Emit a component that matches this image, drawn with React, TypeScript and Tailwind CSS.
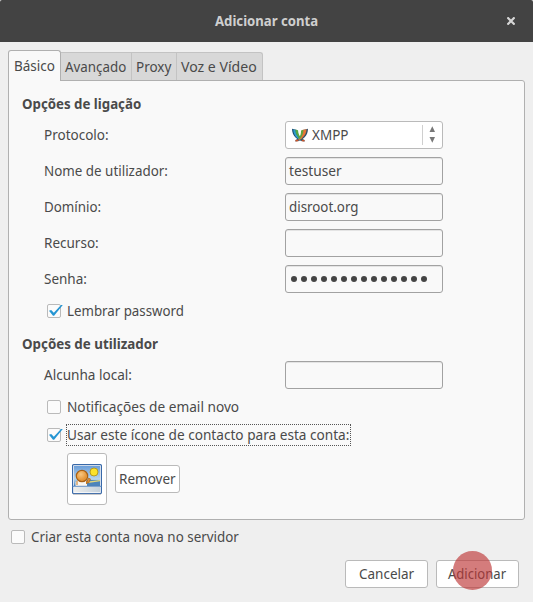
import type { ReactNode } from "react";

function T({ children, className = "scale-x-[0.9]" }: { children: ReactNode; className?: string }) {
  return <span className={"inline-block origin-left -translate-y-px whitespace-nowrap " + className}>{children}</span>;
}

function Tab({ width, textScale, children }: { width: string; textScale: string; children: ReactNode }) {
  return (
    <div className={"h-[29px] shrink-0 border-t border-r border-[#c3c3c3] bg-[#d8d8d8] pl-[4px] leading-[29px] last:rounded-tr-[3px] " + width}>
      <T className={textScale}>{children}</T>
    </div>
  );
}

function Row({ label, textScale, children }: { label: string; textScale: string; children?: ReactNode }) {
  return (
    <div className="flex h-7 items-center">
      <div className="w-[241px] shrink-0 leading-7">
        <T className={textScale}>{label}</T>
      </div>
      {children}
    </div>
  );
}

function Field({ children }: { children?: ReactNode }) {
  return (
    <div className="flex h-7 w-[158px] items-center rounded-[3px] border border-[#a2a2a2] bg-[#f9f9f9] pl-[3px] shadow-[inset_0_1px_0_#e4e4e4]">
      {children}
    </div>
  );
}

function Check({ checked }: { checked?: boolean }) {
  return (
    <div className="h-[14px] w-[14px] shrink-0 rounded-[2px] border border-[#bababa] bg-[#fbfbfb]">
      {checked && (
        <svg className="-mt-px -ml-px overflow-visible" width="16" height="14" viewBox="0 0 16 14">
          <path d="M2 6.7L4.2 6L6.8 8.7L14 1L15.8 1.1L7.1 11.7L6 11.7Z" fill="#2495d3" />
        </svg>
      )}
    </div>
  );
}

function XmppLogo() {
  return (
    <svg width="16" height="14" viewBox="0 0 16 14">
      <path d="M0 .7L5 2C5.2 6.8 8 10 12.5 12V13.5C5.3 12.5 0 8 0 .7Z" fill="#174c70" />
      <path d="M16 .7L11 2C10.8 6.8 8 10 3.5 12V13.5C10.7 12.5 16 8 16 .7Z" fill="#31516b" />
      <path d="M1.3 1.5L3.6 2C4 6.5 5.5 8.8 8.5 11L7.5 11.7C3.6 9.5 1.3 6 1.3 1.5Z" fill="#2d9bcc" />
      <path d="M3.3 1.5L6 2.2C6.3 5.7 7.5 8.5 10 10.8L9 11.6C5.2 9.3 3.6 6 3.3 1.5Z" fill="#55a947" />
      <path d="M14.5 1.3L10 2C10 5.7 9 8.8 6 11.2L7.4 12C12 9.2 14.3 6 14.5 1.3Z" fill="#e87536" />
      <path d="M9 2.4L11.5 1.7C11.4 5.8 10 8.8 7.5 11L6.5 10.6C8.5 8 9 5.5 9 2.4Z" fill="#60a543" />
      <path d="M3.5 12L6 11.4L6.5 13.2L3.5 13.5Z" fill="#c95327" />
      <path d="M10 11.4L12.5 12L12.5 13.5L9.5 13.2Z" fill="#c95327" />
    </svg>
  );
}

function PhotoIcon() {
  return (
    <svg width="30" height="31" viewBox="0 0 30 31">
      <defs>
        <linearGradient id="sky" x1="0" y1="0" x2="0" y2="1">
          <stop offset="0" stopColor="#6b9ed9" />
          <stop offset=".65" stopColor="#b7d5ed" />
          <stop offset="1" stopColor="#427fbd" />
        </linearGradient>
        <linearGradient id="paper">
          <stop stopColor="#eeeeec" />
          <stop offset="1" stopColor="#c4d1dc" />
        </linearGradient>
        <radialGradient id="face" cx=".4" cy=".35">
          <stop stopColor="#f8c781" />
          <stop offset="1" stopColor="#e59638" />
        </radialGradient>
      </defs>
      <rect x=".6" y=".6" width="28.8" height="29" rx="1" fill="#fff" stroke="#3869a9" strokeWidth="1.2" />
      <rect x="2" y="2" width="26" height="20" fill="url(#sky)" />
      <path d="M15 16H28V22H13Z" fill="#4c84bb" />
      <path d="M16 17.5L28 16V17.3L16 19Z" fill="#e2d679" />
      <path d="M3.5 22V18Q6 15.5 9 16.5Q14 15 15 18V22Z" fill="#f9f6f0" />
      <path d="M14.5 19L16.3 14L18.5 15L16.5 19Z" fill="#e09032" stroke="#a86116" strokeWidth=".7" />
      <circle cx="10" cy="12" r="5.7" fill="url(#face)" stroke="#a86116" strokeWidth="1.2" />
      <path d="M5 17V21M14.5 17V20" stroke="#c57925" strokeWidth="1" />
      <circle cx="22" cy="8" r="4" fill="#fce22b" stroke="#b69c20" strokeWidth="1" />
      <rect x="2" y="23" width="26" height="5.3" fill="url(#paper)" />
      <path d="M0 22.3H30" stroke="#4d7eb8" strokeWidth=".9" />
      <path d="M1 30.4H29" stroke="#c8c8c8" />
    </svg>
  );
}

export default function App() {
  return (
    <div className="flex h-[602px] w-[533px] flex-col overflow-hidden bg-[#efefef] font-['Noto_Sans',sans-serif] text-[15px] text-[#4a4a4a]">
      <header className="grid h-[42px] shrink-0 grid-cols-[243px_1fr_29px] rounded-t-[2px] bg-[#434343] text-[#cfcfcf]">
        <div />
        <div className="-ml-7 text-[14px] leading-[44px] font-bold">
          <T className="scale-x-[0.94]">Adicionar conta</T>
        </div>
        <svg className="mt-[17px] ml-[3px]" width="8" height="8" viewBox="0 0 8 8">
          <path d="M.4 .4L7.6 7.6M7.6 .4L.4 7.6" stroke="#d6d6d6" strokeWidth="2.2" />
        </svg>
      </header>

      <nav className="mt-[8px] ml-2 flex h-[31px] shrink-0 items-end">
        <div className="z-10 -mb-px h-[31px] w-[53px] shrink-0 self-start rounded-t-[3px] border border-b-0 border-[#b0b0b0] bg-[#f9f9f9] pl-[5px] leading-[31px]">
          <T>Básico</T>
        </div>
        <Tab width="w-[71px]" textScale="scale-x-[0.89]">Avançado</Tab>
        <Tab width="w-[45px]" textScale="scale-x-[0.9]">Proxy</Tab>
        <Tab width="w-[86px]" textScale="scale-x-[0.94]">Voz e Vídeo</Tab>
      </nav>

      <main className="-mt-px ml-2 h-[440px] w-[517px] shrink-0 rounded-[3px] rounded-tl-none border border-[#b0b0b0] bg-[#f9f9f9] pt-[12px] pl-[13px]">
        <h2 className="h-[22px] leading-[22px] font-bold">
          <T className="scale-x-[0.885]">Opções de ligação</T>
        </h2>
        <div className="mt-[6px] ml-[22px] flex flex-col gap-2">
          <Row label="Protocolo:" textScale="scale-x-[0.9]">
            <div className="flex h-7 w-[158px] items-center rounded-[3px] border border-[#bababa] bg-white pl-[6px]">
              <XmppLogo />
              <div className="ml-1 w-[110px] leading-7">
                <T>XMPP</T>
              </div>
              <svg width="16" height="20" viewBox="0 0 16 20">
                <path d="M.5 0V20" stroke="#cfcfcf" />
                <path d="M7.5 7L10.3 1.3L13 7ZM7.5 12L10.3 17.7L13 12Z" fill="#777" />
              </svg>
            </div>
          </Row>
          <Row label="Nome de utilizador:" textScale="scale-x-[0.893]"><Field><T className="scale-x-[0.915]">testuser</T></Field></Row>
          <Row label="Domínio:" textScale="scale-x-[0.89]"><Field><T className="scale-x-[0.89]">disroot.org</T></Field></Row>
          <Row label="Recurso:" textScale="scale-x-[0.9]"><Field /></Row>
          <Row label="Senha:" textScale="scale-x-[0.9]">
            <Field>
              <div className="ml-[2px] flex gap-1">
                {Array.from({ length: 14 }, (_, i) => <i key={i} className="h-[6px] w-[6px] rounded-full bg-[#444]" />)}
              </div>
            </Field>
          </Row>
        </div>
        <div className="mt-[7px] ml-[25px] flex h-[22px] items-center gap-[6px]">
          <Check checked /><T className="scale-x-[0.886]">Lembrar password</T>
        </div>
        <h2 className="mt-[11px] h-[22px] leading-[22px] font-bold">
          <T className="scale-x-[0.89]">Opções de utilizador</T>
        </h2>
        <div className="mt-[6px] ml-[22px]">
          <Row label="Alcunha local:" textScale="scale-x-[0.905]"><Field /></Row>
        </div>
        <div className="mt-[7px] ml-[25px] flex h-[22px] items-center gap-[6px]">
          <Check /><T className="scale-x-[0.91]">Notificações de email novo</T>
        </div>
        <div className="mt-[6px] ml-[25px] flex h-[22px] items-center gap-[5px]">
          <Check checked />
          <div className="h-[22px] w-[285px] border border-dotted border-[#555] leading-[20px]">
            <T className="scale-x-[0.908]">Usar este ícone de contacto para esta conta:</T>
          </div>
        </div>
        <div className="mt-[7px] ml-[45px] flex items-center gap-2">
          <div className="flex h-[52px] w-[40px] items-center justify-center rounded-[3px] border border-[#bababa] bg-white"><PhotoIcon /></div>
          <div className="h-7 w-[65px] rounded-[3px] border border-[#bababa] bg-white pl-[3px] leading-[26px]"><T>Remover</T></div>
        </div>
      </main>

      <div className="mt-[6px] ml-[11px] flex h-[22px] items-center gap-[6px]">
        <Check /><T className="scale-x-[0.893]">Criar esta conta nova no servidor</T>
      </div>
      <footer className="mt-[12px] ml-[345px] flex gap-2">
        <div className="h-7 w-[83px] rounded-[3px] border border-[#bababa] bg-white pl-[13px] leading-[26px]"><T>Cancelar</T></div>
        <div className="relative h-7 w-[83px] rounded-[3px] border border-[#bababa] bg-white pl-[11px] leading-[26px]">
          <T className="scale-x-[0.87]">Adicionar</T>
          <div className="absolute -top-[10px] left-[16px] h-[39px] w-[39px] rounded-full bg-[#bd3636]/65" />
        </div>
      </footer>
    </div>
  );
}
